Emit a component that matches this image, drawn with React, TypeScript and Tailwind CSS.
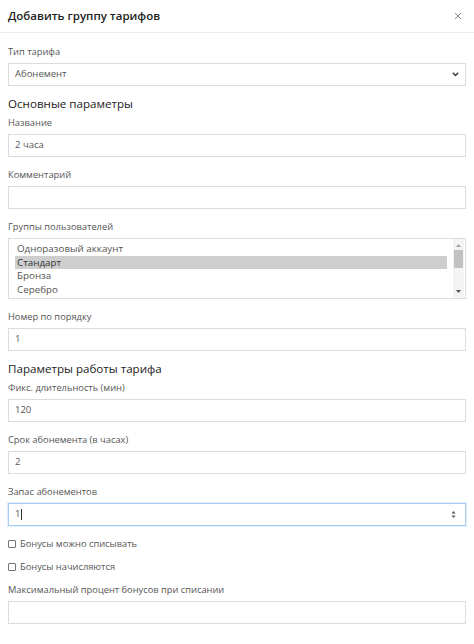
const font = { fontFamily: '"Open Sans", "Noto Sans", "Liberation Sans", sans-serif' };

function Label({ children }: { children: React.ReactNode }) {
  return <div className="mb-[4px] h-[14px] text-[9.3px] leading-[14px] text-[#555]">{children}</div>;
}

function TextInput({ value = "" }: { value?: string }) {
  return (
    <div className="flex h-[23px] items-center border border-[#dcdcdc] bg-white px-[6px] text-[9.5px] text-[#555]">
      {value}
    </div>
  );
}

function Field({ label, value }: { label: string; value?: string }) {
  return (
    <div className="mb-[11px]">
      <Label>{label}</Label>
      <TextInput value={value} />
    </div>
  );
}

function Heading({ children }: { children: React.ReactNode }) {
  return <div className="mb-[4px] h-[16px] text-[11.6px] font-medium leading-[16px] text-[#222]">{children}</div>;
}

function Checkbox({ label }: { label: string }) {
  return (
    <div className="flex h-[14px] items-center gap-[4px] text-[9.3px] text-[#555]">
      <span className="h-[8px] w-[8px] rounded-[1px] border border-[#767676] bg-white" />
      <span>{label}</span>
    </div>
  );
}

const groups = ["Одноразовый аккаунт", "Стандарт", "Бронза", "Серебро"];

export default function App() {
  return (
    <div className="h-[644px] w-[474px] overflow-hidden bg-white" style={font}>
      <div className="flex h-[33px] items-center justify-between border-b border-[#ececec] pl-[8px] pr-[12px]">
        <span className="text-[11.5px] font-semibold text-[#222]">Добавить группу тарифов</span>
        <svg width="8" height="8" viewBox="0 0 8 8" className="text-[#888]">
          <path d="M1 1L7 7M7 1L1 7" stroke="currentColor" strokeWidth="1" />
        </svg>
      </div>

      <div className="px-[8px] pt-[12px]">
        <div className="mb-[10px]">
          <Label>Тип тарифа</Label>
          <div className="flex h-[23px] items-center justify-between border border-[#dcdcdc] bg-white pl-[6px] pr-[6px] text-[9.5px] text-[#555]">
            <span>Абонемент</span>
            <svg width="7" height="5" viewBox="0 0 7 5">
              <path d="M0.8 0.8L3.5 3.6L6.2 0.8" stroke="#333" strokeWidth="1.4" fill="none" />
            </svg>
          </div>
        </div>

        <Heading>Основные параметры</Heading>
        <Field label="Название" value="2 часа" />
        <Field label="Комментарий" />

        <div className="mb-[11px]">
          <Label>Группы пользователей</Label>
          <div className="flex h-[61px] border border-[#dcdcdc] bg-white">
            <div className="flex-1 pl-[6px] pr-[6px] pt-[3px]">
              {groups.map((g, i) => (
                <div
                  key={g}
                  className={
                    "h-[13.5px] pl-[2px] text-[9.8px] leading-[13.5px] " +
                    (i === 1 ? "bg-[#cecece] text-[#333]" : "text-[#555]")
                  }
                >
                  {g}
                </div>
              ))}
            </div>
            <div className="mr-[1px] flex w-[11px] flex-col items-center justify-between bg-[#f4f4f4] py-[5px]">
              <svg width="5" height="3" viewBox="0 0 5 3">
                <path d="M0 3L2.5 0L5 3Z" fill="#a3a3a3" />
              </svg>
              <div className="mb-auto mt-[3px] h-[18px] w-[9px] bg-[#c1c1c1]" />
              <svg width="5" height="3" viewBox="0 0 5 3">
                <path d="M0 0L2.5 3L5 0Z" fill="#505050" />
              </svg>
            </div>
          </div>
        </div>

        <div className="mb-[10px]">
          <Label>Номер по порядку</Label>
          <TextInput value="1" />
        </div>

        <Heading>Параметры работы тарифа</Heading>
        <Field label="Фикс. длительность (мин)" value="120" />
        <Field label="Срок абонемента (в часах)" value="2" />

        <div className="mb-[11px]">
          <Label>Запас абонементов</Label>
          <div className="flex h-[23px] items-center justify-between border border-[#a9cbf3] bg-white px-[6px] text-[9.5px] text-[#555] shadow-[0_0_0_1px_#e3eefc]">
            <span className="flex items-center">
              1<span className="ml-[1px] h-[11px] w-px bg-[#333]" />
            </span>
            <svg width="5" height="9" viewBox="0 0 5 9" className="mr-[3px]">
              <path d="M0.5 3.5L2.5 1L4.5 3.5Z" fill="#555" />
              <path d="M0.5 5.5L2.5 8L4.5 5.5Z" fill="#555" />
            </svg>
          </div>
        </div>

        <div className="flex flex-col gap-[9px]">
          <Checkbox label="Бонусы можно списывать" />
          <Checkbox label="Бонусы начисляются" />
        </div>

        <div className="mt-[9px]">
          <Label>Максимальный процент бонусов при списании</Label>
          <TextInput />
        </div>
      </div>
    </div>
  );
}
